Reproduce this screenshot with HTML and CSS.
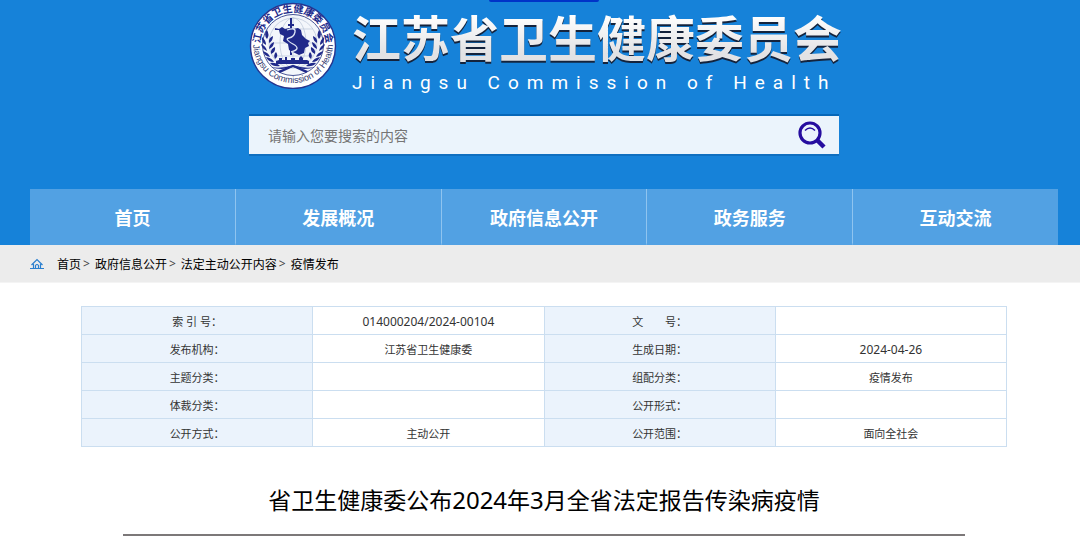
FILE: index.html
```html
<!DOCTYPE html>
<html lang="zh-CN">
<head>
<meta charset="utf-8">
<title>省卫生健康委公布2024年3月全省法定报告传染病疫情</title>
<link rel="stylesheet" href="styles.css">
</head>
<body>
<header class="header">
  <div class="top-tab"></div>
  <div class="brand">
    <svg class="emblem" viewBox="0 0 88 88" aria-hidden="true">
      <defs>
        <path id="arc-top" d="M11.500 50A33 33 0 1 1 76.500 50"/>
        <path id="arc-bottom" d="M4 42A40 40 0 0 0 84 42"/>
      </defs>
      <circle cx="44" cy="45" r="42.500" fill="#fff" stroke="#26358f" stroke-width="1.400"/>
      <circle cx="44" cy="44" r="30.500" fill="#f3f6fb" stroke="#4a5697" stroke-width="1"/>
      <g fill="none" stroke="#b9c4d8" stroke-width=".7">
        <ellipse cx="44" cy="42" rx="24" ry="25"/><ellipse cx="44" cy="42" rx="13" ry="25"/>
        <path d="M44 16V67M20 42H68M24 28H64M24 55H64"/>
      </g>
      <path fill="#20298a" d="M26 27l4 1 3-2 3 2 4-1 4 1 5-1 3 2 1 5 4 4 4 2-2 2 1 3-4 2-1 5-5 2-6-3-4-2-1-6-5-3 1-5-4-2-1-4-4 0z"/>
      <path d="M42 17v37M39 24h6" stroke="#20298a" stroke-width="2"/>
      <path d="M38 29q9-3 8 2t-6 6 4 6-2 8" fill="none" stroke="#dce4f4" stroke-width="1.300"/>
      <path fill="#20298a" d="M27 63v-3l3-1v-2h3v2h3v-3h2v3h4v-2h4v2h4v-2l2-2 2 2v2h4l2 1v3z"/>
      <g fill="#20298a">
        <g id="wreath">
          <path d="M18 38q-4-5 0-9 3 5 0 9zM17 44q-5-3-4-8 4 3 4 8zM18 50q-5-2-6-7 5 2 6 7zM21 56q-6-1-7-6 6 2 7 6zM25 61q-6 0-8-5 6 1 8 5zM31 65q-7 1-10-3 6-1 10 3zM20 42q-1-5 4-7 0 5-4 7zM20 48q0-5 5-7 0 5-5 7zM22 53q-1-5 4-7 1 5-4 7zM26 58q-2-4 1-7 3 4-1 7z"/>
          <path d="M22 66q11 2 22-2l15 6-2 2-13-6q-12 4-22 0z"/>
        </g>
        <use href="#wreath" transform="matrix(-1 0 0 1 88 0)"/>
      </g>
      <text class="emblem-cn" text-anchor="middle"><textPath href="#arc-top" startOffset="50%">江苏省卫生健康委员会</textPath></text>
      <text class="emblem-en" text-anchor="middle"><textPath href="#arc-bottom" startOffset="50%">Jiangsu Commission of Health</textPath></text>
    </svg>
    <div class="brand-text">
      <div class="brand-cn">江苏省卫生健康委员会</div>
      <div class="brand-en">Jiangsu Commission of Health</div>
    </div>
  </div>
  <form class="search">
    <input class="search-input" type="text" aria-label="搜索" placeholder="请输入您要搜索的内容">
    <button class="search-button" type="button" aria-label="搜索">
      <svg class="search-icon" viewBox="0 0 28 28" fill="none" stroke="#260d9f" aria-hidden="true">
        <circle cx="12" cy="12" r="10" stroke-width="3.200"/>
        <path d="M7 9.500q5-5 10 0" stroke-width="1.500"/>
        <path d="M19 19l7 7" stroke-width="4.500"/>
      </svg>
    </button>
  </form>
  <nav class="nav">
    <a class="nav-item" href="#">首页</a>
    <a class="nav-item" href="#">发展概况</a>
    <a class="nav-item" href="#">政府信息公开</a>
    <a class="nav-item" href="#">政务服务</a>
    <a class="nav-item" href="#">互动交流</a>
  </nav>
</header>
<div class="crumbs">
  <svg class="home-icon" viewBox="0 0 14 12" fill="none" stroke="#2a7fcf" aria-hidden="true">
    <path d="M1.500 7L7 1.500 12.500 7M3.500 6v4.500M10.500 6v4.500M0 10.500h14M5.500 10V7.500q1.500-2 3 0V10" stroke-width="1.200"/>
  </svg>
  <a class="crumb" href="#">首页</a><span class="sep">&gt;</span>
  <a class="crumb" href="#">政府信息公开</a><span class="sep">&gt;</span>
  <a class="crumb" href="#">法定主动公开内容</a><span class="sep">&gt;</span>
  <a class="crumb" href="#">疫情发布</a>
</div>
<main class="main">
  <table class="info">
    <tr><th scope="row">索 引 号：</th><td class="num">014000204/2024-00104</td><th scope="row">文&emsp;&emsp;号：</th><td></td></tr>
    <tr><th scope="row">发布机构：</th><td>江苏省卫生健康委</td><th scope="row">生成日期：</th><td class="num">2024-04-26</td></tr>
    <tr><th scope="row">主题分类：</th><td></td><th scope="row">组配分类：</th><td>疫情发布</td></tr>
    <tr><th scope="row">体裁分类：</th><td></td><th scope="row">公开形式：</th><td></td></tr>
    <tr><th scope="row">公开方式：</th><td>主动公开</td><th scope="row">公开范围：</th><td>面向全社会</td></tr>
  </table>
  <h1 class="title">省卫生健康委公布<span class="title-num">2024</span>年<span class="title-num">3</span>月全省法定报告传染病疫情</h1>
</main>
</body>
</html>
```
FILE: styles.css
```css
* { box-sizing: border-box; }
body {
  margin: 0;
  background: #fff;
  color: #000;
  font-family: "Noto Sans", "Noto Sans CJK SC", sans-serif;
}
a { color: inherit; text-decoration: none; }

.header {
  display: flex;
  flex-direction: column;
  align-items: center;
  padding-left: 8px;
  background: #1682d9;
}
.top-tab {
  width: 110px;
  height: 2px;
  margin-bottom: -1px;
  border-radius: 0 0 2px 2px;
  background: #0033c8;
}
.brand {
  display: flex;
  width: 100%;
  max-width: 590px;
  gap: 15px;
}
.emblem { flex: none; width: 88px; height: 88px; }
.emblem-cn { font: bold 10px "Noto Sans CJK SC", sans-serif; fill: #20298a; }
.emblem-en { font: 9px "Liberation Sans", sans-serif; fill: #333a70; }
.brand-text { white-space: nowrap; }
.brand-cn {
  height: 70px;
  font: bold 49px/70px "Noto Sans CJK SC", sans-serif;
  color: transparent;
  background: linear-gradient(#fff 20%, #e2e2e4 75%);
  -webkit-background-clip: text;
  background-clip: text;
  filter: drop-shadow(0 2px 0 #14233c);
}
.brand-en {
  font: 19px/24px Roboto, sans-serif;
  letter-spacing: 8px;
  color: #fff;
}

.search {
  display: flex;
  align-items: center;
  width: 100%;
  max-width: 590px;
  height: 42px;
  margin-top: 19px;
  border-top: 2px solid #0667b8;
  border-bottom: 2px solid #0f6fc0;
  background: #ebf4fc;
}
.search-input {
  flex: 1;
  min-width: 0;
  height: 38px;
  padding: 0 19px;
  border: 0;
  background: none;
  font: 14px "Noto Sans CJK SC", sans-serif;
  color: #333;
}
.search-input::placeholder { color: #757575; opacity: 1; }
.search-button {
  display: flex;
  padding: 0 13px 0 0;
  border: 0;
  background: none;
}
.search-icon { width: 28px; height: 28px; }

.nav {
  display: flex;
  align-self: stretch;
  margin: 33px 22px 0;
  background: #52a1e3;
}
.nav-item {
  flex: 1;
  border-right: 1px solid;
  border-image: linear-gradient(#8fc4ef 94%, #52a1e3) 1;
  color: #fff;
  font: bold 18px/56px "Noto Sans CJK SC", sans-serif;
  text-align: center;
}
.nav-item:last-child { border-right: 0; }

.crumbs {
  display: flex;
  align-items: center;
  height: 38px;
  padding-left: 30px;
  border-bottom: 1px solid #f4f4f4;
  background: #ececec;
  font-size: 12px;
}
.home-icon { width: 14px; height: 12px; margin-right: 13px; }
.sep { margin: 0 5px 0 2px; color: #444; }

.main { padding: 23px 0 0 8px; }
.info {
  width: calc(100% - 146px);
  margin: 0 auto;
  border-collapse: collapse;
  table-layout: fixed;
  font-size: 11px;
  line-height: 17px;
  color: #333;
}
.info th, .info td {
  height: 28px;
  padding: 1px 0 0;
  border: 1px solid #cbdef0;
  font-weight: normal;
  text-align: center;
}
.info th { background: #ebf3fc; }
.info .num { font-size: 12px; }

.title {
  margin: 33px 115px 0;
  padding-bottom: 14px;
  border-bottom: 2px solid #7c7879;
  font-size: 23px;
  font-weight: normal;
  line-height: 40px;
  text-align: center;
}
.title-num { font-size: 24px; }
```
